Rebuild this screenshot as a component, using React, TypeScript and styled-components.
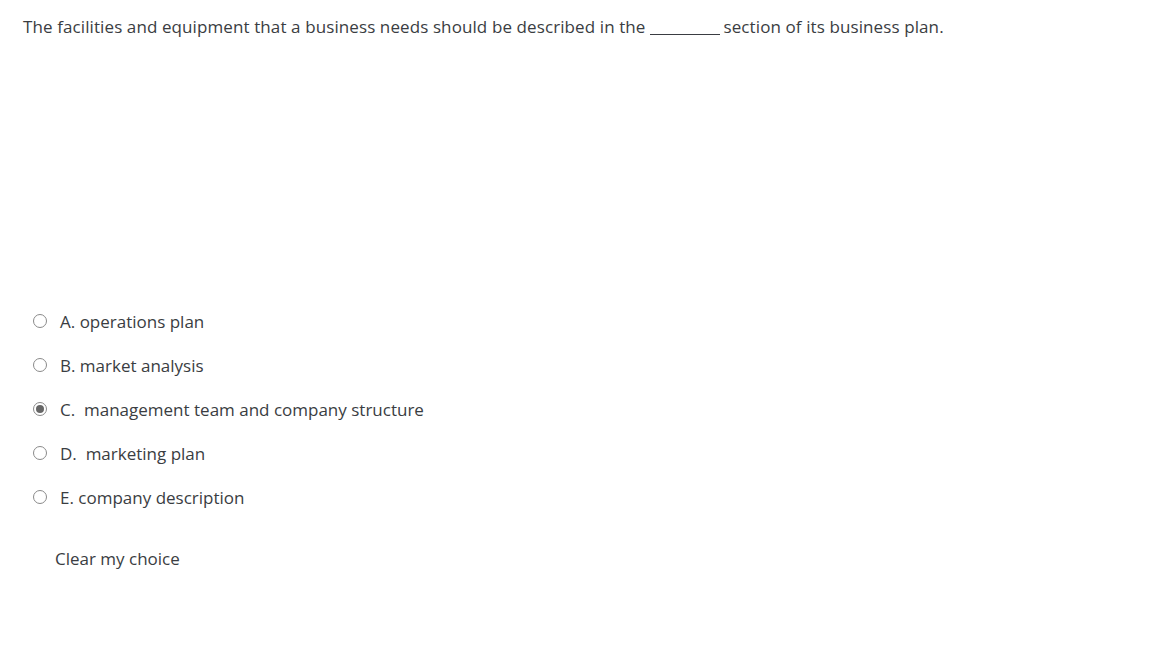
import React from "react";
import styled, { createGlobalStyle } from "styled-components";

const Global = createGlobalStyle`
  html, body { margin: 0; padding: 0; background: #fff; }
  body { font-family: "Open Sans", "Noto Sans", sans-serif; color: #3a3d42; }
`;

const Page = styled.div`
  padding: 16px 23px 0 23px;
  display: flex;
  flex-direction: column;
`;

const Question = styled.p`
  margin: 0;
  font-size: 17px;
  line-height: 22px;
  letter-spacing: 0.1px;
`;

const Blank = styled.span`
  display: inline-block;
  width: 70px;
  border-bottom: 1px solid #3a3d42;
  margin: 0 4px 0 4px;
  vertical-align: -2px;
  height: 1px;
`;

const Options = styled.div`
  margin-top: 261px;
  display: flex;
  flex-direction: column;
  padding-left: 10px;
`;

const Option = styled.label`
  display: flex;
  align-items: center;
  height: 44px;
  font-size: 17px;
`;

const Radio = styled.span<{ $checked?: boolean }>`
  box-sizing: border-box;
  width: 14px;
  height: 14px;
  border-radius: 50%;
  border: 1px solid #8a8a8a;
  background: #fff;
  display: flex;
  align-items: center;
  justify-content: center;
  margin-right: 13px;
  &::after {
    content: "";
    display: ${(p) => (p.$checked ? "block" : "none")};
    width: 8px;
    height: 8px;
    border-radius: 50%;
    background: #666;
  }
`;

const Clear = styled.div`
  margin-top: 28px;
  padding-left: 32px;
  font-size: 17px;
`;

const opts = [
  { t: "A. operations plan" },
  { t: "B. market analysis" },
  { t: "C.\u00a0 management team and company structure", c: true },
  { t: "D.\u00a0 marketing plan" },
  { t: "E. company description" },
];

export default function App() {
  return (
    <>
      <Global />
      <Page>
        <Question>
          The facilities and equipment that a business needs should be described in the
          <Blank />
          section of its business plan.
        </Question>
        <Options>
          {opts.map((o) => (
            <Option key={o.t}>
              <Radio $checked={o.c} />
              {o.t}
            </Option>
          ))}
        </Options>
        <Clear>Clear my choice</Clear>
      </Page>
    </>
  );
}
